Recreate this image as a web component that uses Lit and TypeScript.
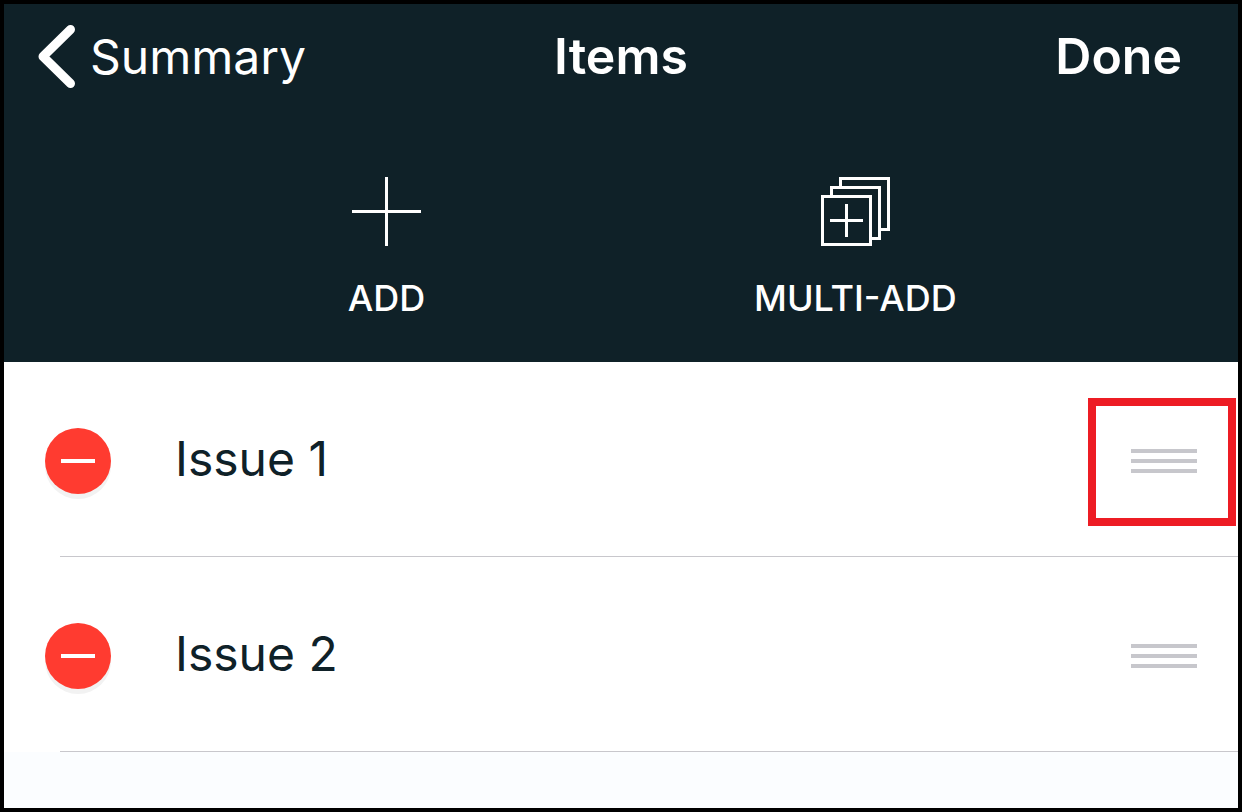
import { LitElement, html, css } from "lit";
import { customElement, state } from "lit/decorators.js";

@customElement("app-root")
export class AppRoot extends LitElement {
  static styles = css`
    :host { display: block; font-family: Inter, "Liberation Sans", sans-serif; }
    .screen { box-sizing: border-box; min-height: 100vh; border: 4px solid #000; background: #fbfdff; color: #0f2128; }
    button { font: inherit; color: inherit; background: none; border: 0; margin: 0; padding: 0; cursor: pointer; }
    svg { display: block; flex: none; }
    header { background: #0f2128; color: #fff; padding-bottom: 42px; }
    .bar { display: grid; grid-template-columns: 1fr auto 1fr; align-items: center; padding: 21px 34px 0; font-size: 48px; line-height: 64px; }
    .back { justify-self: start; display: flex; align-items: center; gap: 14px; color: inherit; text-decoration: none; }
    h1 { margin: 0; font-size: 50px; line-height: 62px; padding-bottom: 2px; font-weight: 600; }
    .done { justify-self: end; margin-right: 22px; padding-bottom: 2px; font-size: 50px; line-height: 62px; font-weight: 600; }
    .tools { display: flex; justify-content: center; padding: 88px 0 0; }
    .tool { display: flex; flex-direction: column; align-items: center; gap: 29px; width: 38%; font-size: 36px; line-height: 44px; font-weight: 500; }
    ul { margin: 0; padding: 0; list-style: none; background: #fff; }
    .row { box-sizing: border-box; display: flex; align-items: center; padding: 4px 2px 0 41px; height: 194px; }
    .line { height: 1px; margin-left: 56px; background: #c8c7cc; }
    .remove { display: grid; place-items: center; width: 66px; height: 66px; border-radius: 50%; background: #ff3b30; box-shadow: 0 5px 0 #f2f2f2; }
    .name { flex: 1; margin-left: 64px; padding-bottom: 4px; font-size: 48px; line-height: 64px; }
    .grip { display: grid; place-items: center; box-sizing: border-box; width: 148px; height: 128px; margin-top: 2px; padding: 0 0 2px 4px; border: 8px solid transparent; cursor: grab; }
    .marked { border-color: #ed1c24; }
  `;

  @state() private items = [
    { name: "Issue 1", marked: true },
    { name: "Issue 2", marked: false },
  ];

  private remove(name: string) {
    this.items = this.items.filter((i) => i.name !== name);
  }

  render() {
    return html`<main class="screen">
      <header>
        <nav class="bar">
          <a class="back" href="#summary">
            <svg width="38" height="64" viewBox="0 0 38 64"><path d="M32.500 4.500 5 31.500l27.500 27" fill="none" stroke="#fff" stroke-width="9" stroke-linecap="round" stroke-linejoin="round"/></svg>
            <span>Summary</span>
          </a>
          <h1>Items</h1>
          <button class="done">Done</button>
        </nav>
        <div class="tools">
          <button class="tool">
            <svg width="69" height="70" viewBox="0 0 69 70" shape-rendering="crispEdges"><path d="M34.500 0v69M0 34.500h69" fill="none" stroke="#fff" stroke-width="3"/></svg>
            <span>ADD</span>
          </button>
          <button class="tool">
            <svg width="69" height="70" viewBox="0 0 69 70" fill="none" stroke="#fff" stroke-width="3" shape-rendering="crispEdges"><path d="M1.500 19.500h48v48h-48zM10.500 18v-7.500h48v51H51M19.500 9V1.500h48v51H60M25.500 27v33M9 43.500h33"/></svg>
            <span>MULTI-ADD</span>
          </button>
        </div>
      </header>
      <ul>
        ${this.items.map((i) => html`<li>
          <div class="row">
            <button class="remove" aria-label="Remove ${i.name}" @click=${() => this.remove(i.name)}>
              <svg width="34" height="4"><rect width="34" height="4" fill="#fff"/></svg>
            </button>
            <span class="name">${i.name}</span>
            <button class="grip ${i.marked ? "marked" : ""}" aria-label="Reorder ${i.name}">
              <svg width="66" height="24" fill="#c7c7cc"><path d="M0 0h66v4H0zM0 10h66v4H0zM0 20h66v4H0z"/></svg>
            </button>
          </div>
          <div class="line"></div>
        </li>`)}
      </ul>
    </main>`;
  }
}
